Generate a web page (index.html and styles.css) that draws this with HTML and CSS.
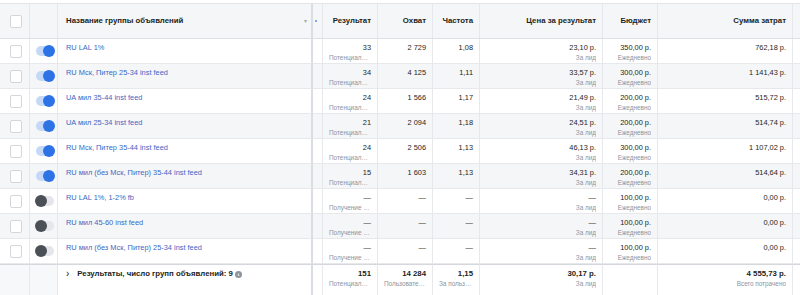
FILE: index.html
```html
<!DOCTYPE html>
<html lang="ru">
<head>
    <meta charset="UTF-8">
    <meta name="viewport" content="width=device-width, initial-scale=1.0">
    <title>Группы объявлений</title>
    <link rel="stylesheet" href="styles.css">
</head>
<body>
    <table class="grid">
        <colgroup>
            <col class="c-check">
            <col class="c-toggle">
            <col class="c-name">
            <col class="c-gap">
            <col class="c-res">
            <col class="c-reach">
            <col class="c-freq">
            <col class="c-cost">
            <col class="c-budget">
            <col class="c-spent">
            <col class="c-more">
        </colgroup>
        <thead>
            <tr>
                <th class="cell-check"><span class="checkbox"></span></th>
                <th></th>
                <th class="cell-name">
                    <div class="name-head">
                        <span>Название группы объявлений</span>
                        <span class="caret">▾</span>
                    </div>
                </th>
                <th class="cell-gap"><span class="handle"></span></th>
                <th class="num">Результат</th>
                <th class="num">Охват</th>
                <th class="num">Частота</th>
                <th class="num">Цена за результат</th>
                <th class="num">Бюджет</th>
                <th class="num">Сумма затрат</th>
                <th class="cell-more"></th>
            </tr>
        </thead>
        <tbody>
            <tr>
                <td class="cell-check"><span class="checkbox"></span></td>
                <td class="cell-toggle"><span class="toggle on"></span></td>
                <td class="cell-name"><a href="#">RU LAL 1%</a></td>
                <td class="cell-gap"></td>
                <td class="num">33<span class="sub">Потенциальные клиенты</span></td>
                <td class="num">2 729</td>
                <td class="num">1,08</td>
                <td class="num">23,10 р.<span class="sub">За лид</span></td>
                <td class="num">350,00 р.<span class="sub">Ежедневно</span></td>
                <td class="num">762,18 р.</td>
                <td class="cell-more"></td>
            </tr>
            <tr>
                <td class="cell-check"><span class="checkbox"></span></td>
                <td class="cell-toggle"><span class="toggle on"></span></td>
                <td class="cell-name"><a href="#">RU Мск, Питер 25-34 inst feed</a></td>
                <td class="cell-gap"></td>
                <td class="num">34<span class="sub">Потенциальные клиенты</span></td>
                <td class="num">4 125</td>
                <td class="num">1,11</td>
                <td class="num">33,57 р.<span class="sub">За лид</span></td>
                <td class="num">300,00 р.<span class="sub">Ежедневно</span></td>
                <td class="num">1 141,43 р.</td>
                <td class="cell-more"></td>
            </tr>
            <tr>
                <td class="cell-check"><span class="checkbox"></span></td>
                <td class="cell-toggle"><span class="toggle on"></span></td>
                <td class="cell-name"><a href="#">UA мил 35-44 inst feed</a></td>
                <td class="cell-gap"></td>
                <td class="num">24<span class="sub">Потенциальные клиенты</span></td>
                <td class="num">1 566</td>
                <td class="num">1,17</td>
                <td class="num">21,49 р.<span class="sub">За лид</span></td>
                <td class="num">200,00 р.<span class="sub">Ежедневно</span></td>
                <td class="num">515,72 р.</td>
                <td class="cell-more"></td>
            </tr>
            <tr>
                <td class="cell-check"><span class="checkbox"></span></td>
                <td class="cell-toggle"><span class="toggle on"></span></td>
                <td class="cell-name"><a href="#">UA мил 25-34 inst feed</a></td>
                <td class="cell-gap"></td>
                <td class="num">21<span class="sub">Потенциальные клиенты</span></td>
                <td class="num">2 094</td>
                <td class="num">1,18</td>
                <td class="num">24,51 р.<span class="sub">За лид</span></td>
                <td class="num">200,00 р.<span class="sub">Ежедневно</span></td>
                <td class="num">514,74 р.</td>
                <td class="cell-more"></td>
            </tr>
            <tr>
                <td class="cell-check"><span class="checkbox"></span></td>
                <td class="cell-toggle"><span class="toggle on"></span></td>
                <td class="cell-name"><a href="#">RU Мск, Питер 35-44 inst feed</a></td>
                <td class="cell-gap"></td>
                <td class="num">24<span class="sub">Потенциальные клиенты</span></td>
                <td class="num">2 506</td>
                <td class="num">1,13</td>
                <td class="num">46,13 р.<span class="sub">За лид</span></td>
                <td class="num">300,00 р.<span class="sub">Ежедневно</span></td>
                <td class="num">1 107,02 р.</td>
                <td class="cell-more"></td>
            </tr>
            <tr>
                <td class="cell-check"><span class="checkbox"></span></td>
                <td class="cell-toggle"><span class="toggle on"></span></td>
                <td class="cell-name"><a href="#">RU мил (без Мск, Питер) 35-44 inst feed</a></td>
                <td class="cell-gap"></td>
                <td class="num">15<span class="sub">Потенциальные клиенты</span></td>
                <td class="num">1 603</td>
                <td class="num">1,13</td>
                <td class="num">34,31 р.<span class="sub">За лид</span></td>
                <td class="num">200,00 р.<span class="sub">Ежедневно</span></td>
                <td class="num">514,64 р.</td>
                <td class="cell-more"></td>
            </tr>
            <tr>
                <td class="cell-check"><span class="checkbox"></span></td>
                <td class="cell-toggle"><span class="toggle"></span></td>
                <td class="cell-name"><a href="#">RU LAL 1%, 1-2% fb</a></td>
                <td class="cell-gap"></td>
                <td class="num">—<span class="sub">Получение результатов</span></td>
                <td class="num">—</td>
                <td class="num">—</td>
                <td class="num">—<span class="sub">За лид</span></td>
                <td class="num">100,00 р.<span class="sub">Ежедневно</span></td>
                <td class="num">0,00 р.</td>
                <td class="cell-more"></td>
            </tr>
            <tr>
                <td class="cell-check"><span class="checkbox"></span></td>
                <td class="cell-toggle"><span class="toggle"></span></td>
                <td class="cell-name"><a href="#">RU мил 45-60 inst feed</a></td>
                <td class="cell-gap"></td>
                <td class="num">—<span class="sub">Получение результатов</span></td>
                <td class="num">—</td>
                <td class="num">—</td>
                <td class="num">—<span class="sub">За лид</span></td>
                <td class="num">100,00 р.<span class="sub">Ежедневно</span></td>
                <td class="num">0,00 р.</td>
                <td class="cell-more"></td>
            </tr>
            <tr>
                <td class="cell-check"><span class="checkbox"></span></td>
                <td class="cell-toggle"><span class="toggle"></span></td>
                <td class="cell-name"><a href="#">RU мил (без Мск, Питер) 25-34 inst feed</a></td>
                <td class="cell-gap"></td>
                <td class="num">—<span class="sub">Получение результатов</span></td>
                <td class="num">—</td>
                <td class="num">—</td>
                <td class="num">—<span class="sub">За лид</span></td>
                <td class="num">100,00 р.<span class="sub">Ежедневно</span></td>
                <td class="num">0,00 р.</td>
                <td class="cell-more"></td>
            </tr>
        </tbody>
        <tfoot>
            <tr>
                <td class="cell-check"></td>
                <td class="cell-toggle"></td>
                <td class="cell-name">
                    <div class="summary">
                        <span class="chevron">›</span>
                        <span>Результаты, число групп объявлений: 9</span>
                        <span class="info">i</span>
                    </div>
                </td>
                <td class="cell-gap"></td>
                <td class="num">151<span class="sub">Потенциальные клиенты</span></td>
                <td class="num">14 284<span class="sub">Пользователи Центра аккаунтов</span></td>
                <td class="num">1,15<span class="sub">За пользователя Центра аккаунтов</span></td>
                <td class="num">30,17 р.<span class="sub">За лид</span></td>
                <td class="num"></td>
                <td class="num">4 555,73 р.<span class="sub">Всего потрачено</span></td>
                <td class="cell-more"></td>
            </tr>
        </tfoot>
    </table>
</body>
</html>
```

FILE: styles.css
```css
* {
    margin: 0;
    padding: 0;
    box-sizing: border-box;
    font-family: 'Liberation Sans', Arial, sans-serif;
}

body {
    background: white;
    color: #1c1e21;
    padding-top: 3px;
}

.grid {
    width: 800px;
    table-layout: fixed;
    border-collapse: separate;
    border-spacing: 0;
    font-size: 7.4px;
}

.c-check { width: 30px; }
.c-toggle { width: 28px; }
.c-name { width: 255px; }
.c-gap { width: 10px; }
.c-res { width: 55px; }
.c-reach { width: 55px; }
.c-freq { width: 47px; }
.c-cost { width: 123px; }
.c-budget { width: 55px; }
.c-spent { width: 135px; }
.c-more { width: 7px; }

th,
td {
    border-right: 1px solid #e6e8eb;
    border-bottom: 1px solid #e6e8eb;
    padding: 4px 6px 0;
    line-height: 10px;
    vertical-align: top;
    white-space: nowrap;
    overflow: hidden;
    text-overflow: ellipsis;
}

th:last-child,
td:last-child {
    border-right: none;
}

thead th {
    background: #f5f6f7;
    border-top: 1px solid #e3e5e8;
    border-bottom-color: #dcdfe3;
    height: 36px;
    padding-top: 0;
    vertical-align: middle;
    font-size: 7.8px;
    font-weight: bold;
    text-align: left;
}

tbody tr:nth-child(even) td {
    background: #f5f6f7;
}

.num {
    text-align: right;
}

.sub {
    display: block;
    font-size: 6.4px;
    color: #8d949e;
    overflow: hidden;
    text-overflow: ellipsis;
    text-align: right;
}

.cell-check,
.cell-toggle {
    padding: 0;
    vertical-align: middle;
    text-align: center;
}

.cell-check {
    padding-left: 3px;
}

.cell-name {
    padding-left: 8px;
    border-right: 2px solid #dadde1;
}

th.cell-name {
    padding-right: 4px;
}

.cell-gap {
    padding: 0;
}

.cell-name a {
    color: #3a67c4;
    text-decoration: none;
}

.checkbox {
    display: inline-block;
    width: 12px;
    height: 13px;
    border: 1px solid #d3d6db;
    border-radius: 2px;
    background: white;
    vertical-align: middle;
}

.toggle {
    display: inline-block;
    position: relative;
    width: 18px;
    height: 10px;
    margin-left: 2px;
    border-radius: 5px;
    background: #e4e6eb;
    vertical-align: middle;
}

.toggle::after {
    content: '';
    position: absolute;
    top: -1px;
    left: -1px;
    width: 12px;
    height: 12px;
    border-radius: 50%;
    background: #4b4f56;
}

.toggle.on {
    background: #c6d8f7;
}

.toggle.on::after {
    left: auto;
    right: -1px;
    background: #2d73e6;
}

.name-head {
    display: flex;
    justify-content: space-between;
    align-items: center;
}

.caret {
    color: #a4a9b0;
    font-size: 6px;
    font-weight: normal;
}

th.cell-gap {
    padding-left: 2px;
}

.handle {
    display: inline-block;
    width: 2px;
    height: 2px;
    border-radius: 1px;
    background: #5b8de8;
    vertical-align: middle;
}

tfoot td {
    border-top: 1px solid #d4d7dc;
    border-bottom: none;
    height: 32px;
    font-weight: bold;
    font-size: 7.8px;
}

tfoot .sub {
    font-weight: normal;
}

tfoot .cell-check,
tfoot .cell-toggle {
    background: #f7f8f9;
}

.summary {
    display: flex;
    align-items: center;
    gap: 7px;
}

.chevron {
    font-size: 10px;
    font-weight: normal;
    line-height: 10px;
    margin-right: 1px;
}

.info {
    display: inline-block;
    width: 7px;
    height: 7px;
    margin-left: -5px;
    border-radius: 50%;
    background: #8d949e;
    color: white;
    font-size: 5px;
    line-height: 7px;
    text-align: center;
    font-family: 'Liberation Serif', serif;
}
```
